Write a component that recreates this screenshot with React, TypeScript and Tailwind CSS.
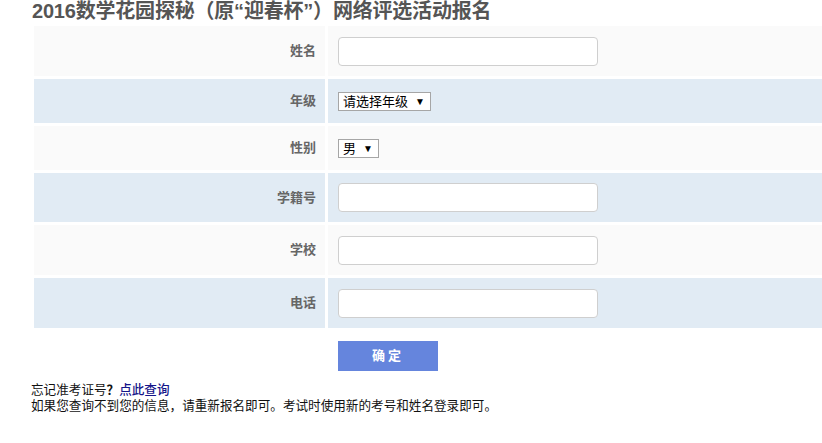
const rows = [
  { label: '姓名', kind: 'input', h: 'h-[50px]', bg: 'bg-[#fafafa]' },
  { label: '年级', kind: 'grade', h: 'h-[44px]', bg: 'bg-[#e1ebf4]' },
  { label: '性别', kind: 'sex', h: 'h-[44px]', bg: 'bg-[#fafafa]' },
  { label: '学籍号', kind: 'input', h: 'h-[49px]', bg: 'bg-[#e1ebf4]' },
  { label: '学校', kind: 'input', h: 'h-[50px]', bg: 'bg-[#fafafa]' },
  { label: '电话', kind: 'input', h: 'h-[50px]', bg: 'bg-[#e1ebf4]' },
]

const FakeSelect: React.FC<{ text: string }> = ({ text }) => (
  <div className="inline-flex h-[19px] items-center border border-[#a6a6a6] bg-white pl-[4px] pr-[5px] text-[13px] leading-none text-black">
    <span>{text}</span>
    <span className="ml-[7px] text-[10px]">▼</span>
  </div>
)

const App: React.FC = () => {
  return (
    <div
      className="min-h-[443px] overflow-hidden bg-white pl-[31px]"
      style={{ fontFamily: '"Liberation Sans", "Noto Sans CJK SC", sans-serif' }}
    >
      <h1 className="h-[23px] pl-[1px] text-[20px] font-bold leading-[23px] text-[#555] -tracking-[0.2px]">
        2016数学花园探秘（原“迎春杯”）网络评选活动报名
      </h1>
      <table className="w-[800px] border-separate border-spacing-[3px]">
        <tbody>
          {rows.map((r) => (
            <tr key={r.label}>
              <td className={`${r.h} ${r.bg} w-[291px] pr-[9px] text-right text-[13px] font-bold text-[#666]`}>
                {r.label}
              </td>
              <td className={`${r.h} ${r.bg} pl-[10px]`}>
                {r.kind === 'input' && (
                  <input
                    type="text"
                    className="block h-[29px] w-[260px] rounded-[4px] border border-[#cfcfcf] bg-white px-2 text-[13px] outline-none"
                  />
                )}
                {r.kind === 'grade' && <FakeSelect text="请选择年级" />}
                {r.kind === 'sex' && <FakeSelect text="男" />}
              </td>
            </tr>
          ))}
        </tbody>
      </table>
      <div className="pl-[307px] pt-[10px]">
        <button className="h-[30px] w-[100px] bg-[#6585dd] text-[13px] font-bold tracking-[3px] text-white">
          确定
        </button>
      </div>
      <div className="pt-[11px] text-[12.6px] leading-[16px] text-[#111]">
        <p>
          忘记准考证号<span className="font-bold">？</span>
          <a href="#" className="font-medium text-[#15158a]">点此查询</a>
        </p>
        <p>如果您查询不到您的信息，请重新报名即可。考试时使用新的考号和姓名登录即可。</p>
      </div>
    </div>
  )
}

export default App
